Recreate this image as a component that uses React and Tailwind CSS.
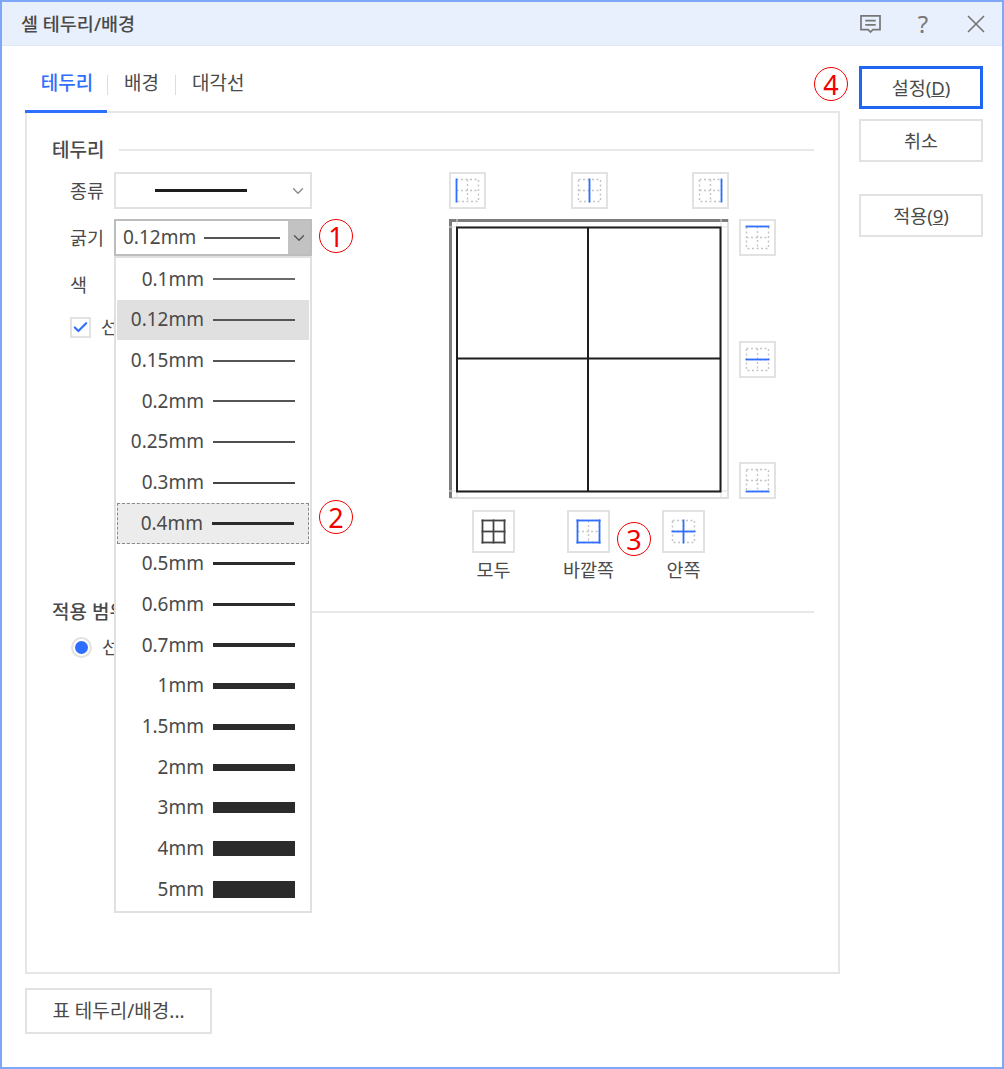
import React from 'react';
import { X, Check, ChevronDown } from 'lucide-react';

const WIDTHS = [
  { label: '0.1mm', line: 'h-[2px] bg-[#6a6a6a]' },
  { label: '0.12mm', line: 'h-[2px] bg-[#555555]', selected: true },
  { label: '0.15mm', line: 'h-[2px] bg-[#555555]' },
  { label: '0.2mm', line: 'h-[2px] bg-[#555555]' },
  { label: '0.25mm', line: 'h-[2px] bg-[#505050]' },
  { label: '0.3mm', line: 'h-[2px] bg-[#444444]' },
  { label: '0.4mm', line: 'h-[3px] bg-[#2b2b2b]', focused: true },
  { label: '0.5mm', line: 'h-[3px] bg-[#2b2b2b]' },
  { label: '0.6mm', line: 'h-[3px] bg-[#2b2b2b]' },
  { label: '0.7mm', line: 'h-[4px] bg-[#2b2b2b]' },
  { label: '1mm', line: 'h-[6px] bg-[#2b2b2b]' },
  { label: '1.5mm', line: 'h-[6px] bg-[#2b2b2b]' },
  { label: '2mm', line: 'h-[7px] bg-[#2b2b2b]' },
  { label: '3mm', line: 'h-[11px] bg-[#2b2b2b]' },
  { label: '4mm', line: 'h-[15px] bg-[#2b2b2b]' },
  { label: '5mm', line: 'h-[17px] bg-[#2b2b2b]' },
];

// dotted cell grid with the active lines drawn blue on top
function GridIcon({ size = 25, active = [], showDots = true, color = '#2f6fff' }) {
  const m = 12.5;
  return (
    <svg width={size} height={size} viewBox="0 0 25 25" fill="none">
      {showDots && (
        <g stroke="#c4c4c4" strokeWidth="1.4" strokeDasharray="2 2.5">
          <path d="M1.5 1.5H23.5V23.5H1.5Z" />
          <path d={`M${m} 1.5V23.5M1.5 ${m}H23.5`} />
        </g>
      )}
      <g stroke={color} strokeWidth="1.8">
        {active.includes('left') && <path d="M1.5 .5V24.5" />}
        {active.includes('vcenter') && <path d={`M${m} .5V24.5`} />}
        {active.includes('right') && <path d="M23.5 .5V24.5" />}
        {active.includes('top') && <path d="M.5 1.5H24.5" />}
        {active.includes('hcenter') && <path d={`M.5 ${m}H24.5`} />}
        {active.includes('bottom') && <path d="M.5 23.5H24.5" />}
      </g>
    </svg>
  );
}

function IconButton({ active }) {
  return (
    <button className="flex h-[37px] w-[37px] items-center justify-center border-2 border-[#e2e2e2] bg-white">
      <GridIcon active={active} />
    </button>
  );
}

function PresetButton({ label, active, color, showDots }) {
  return (
    <div className="flex w-[43px] flex-col items-center whitespace-nowrap">
      <button className="flex h-[43px] w-[43px] shrink-0 items-center justify-center border-2 border-[#e2e2e2] bg-white">
        <GridIcon active={active} color={color} showDots={showDots} />
      </button>
      <span className="mt-[5px] leading-[24px]">{label}</span>
    </div>
  );
}

function Circled({ n, className }) {
  return (
    <div className={`absolute flex h-[34px] w-[34px] items-center justify-center rounded-full border border-[#f00000] text-[27px] leading-none text-[#f00000] ${className}`}>
      {n}
    </div>
  );
}

function SectionTitle({ title, className = '' }) {
  return (
    <div className={`flex items-center gap-[15px] ${className}`}>
      <span className="text-[19px] leading-[20px] font-medium whitespace-nowrap">{title}</span>
      <div className="h-[2px] flex-1 bg-[#e8e8e8]" />
    </div>
  );
}

function Preview() {
  return (
    <svg width="280" height="280" viewBox="0 0 280 280" fill="none" className="shrink-0">
      <path d="M1 279V1H279V279H1" stroke="#dedede" strokeWidth="2" />
      <path d="M1.5 279V1.5H279" stroke="#7d7d7d" strokeWidth="3" />
      <path d="M0 8H280M0 272H280M8 0V280M272 0V280" stroke="#dedede" strokeWidth="1" />
      <path d="M8 8.5H271.5V272.5H8Z" stroke="#1d1d1d" strokeWidth="2" />
      <path d="M139 8V272M8 139.5H271" stroke="#1d1d1d" strokeWidth="2" />
    </svg>
  );
}

function WidthList() {
  return (
    <div className="absolute left-[87px] top-[143px] z-10 h-[657px] w-[198px] border-2 border-[#e0e0e0] bg-white pt-px">
      {WIDTHS.map((w) => (
        <div
          key={w.label}
          className={`mx-px flex h-[40.67px] items-center justify-end pr-[14px] ${w.selected ? 'bg-[#e0e0e0]' : ''} ${w.focused ? 'border border-dashed border-[#8a8a8a] bg-[#ececec]' : ''}`}
        >
          <span className="text-[19px] leading-none text-[#4a4a4a]">{w.label}</span>
          <div className={`ml-[9px] w-[82px] ${w.line}`} />
        </div>
      ))}
    </div>
  );
}

export default function App() {
  return (
    <div
      className="relative flex h-[1069px] w-[1004px] flex-col border-2 border-[#7fa7f7] bg-white text-[#4a4a4a]"
      style={{ fontFamily: '"Noto Sans", "Noto Sans CJK KR", sans-serif' }}
    >
      {/* Title bar */}
      <div className="flex h-[44px] shrink-0 items-center border-b border-[#dfe8f8] bg-[#e9f0fd] pl-[19px] pr-[11px]">
        <span className="text-[18.5px] font-medium">셀 테두리/배경</span>
        <div className="ml-auto flex items-center gap-[29px] text-[#777777]">
          <svg className="mr-[4px] mt-[2px]" width="21" height="19" viewBox="0 0 22 20" fill="none" stroke="#777777" strokeWidth="1.8">
            <path d="M1 1H21V15.5H13.5L11 18L8.5 15.5H1Z" />
            <path d="M5.5 6H16.5M5.5 10.5H16.5" />
          </svg>
          <span className="w-[18px] text-center text-[24px] leading-none">?</span>
          <X className="h-[30px] w-[30px]" strokeWidth={1.4} />
        </div>
      </div>

      <div className="flex flex-1 pl-[23px] pr-[19px] pt-[20px]">
        {/* Left side */}
        <div className="w-[815px]">
          <div className="relative z-10 flex h-[47px] items-start text-[19px] -mb-[2px]">
            <div className="flex h-[47px] w-[82px] items-start justify-center border-b-[3px] border-[#2f6fff] pt-[3px] pl-[2px] font-medium text-[#2f6fff]">테두리</div>
            <div className="flex h-[44px] items-start pt-[3px]">
              <div className="mt-[6px] h-[20px] w-px bg-[#dddddd]" />
              <span className="px-[16px]">배경</span>
              <div className="mt-[6px] h-[20px] w-px bg-[#dddddd]" />
              <span className="px-[16px]">대각선</span>
            </div>
          </div>

          <div className="relative h-[863px] border-2 border-[#e6e6e6] px-[25px] pt-[27px]">
            <SectionTitle title="테두리" className="mr-[-1px]" />

            <div className="mt-[12px] flex h-[431px]">
              {/* Type / width / colour */}
              <div className="w-[260px] pl-[18px] text-[18.5px]">
                <div className="flex h-[37px] items-center">
                  <span className="w-[44px]">종류</span>
                  <div className="flex h-[37px] w-[198px] items-center border-2 border-[#e2e2e2] pr-[3px]">
                    <div className="ml-[39px] h-[3px] w-[92px] bg-[#1d1d1d]" />
                    <ChevronDown className="ml-auto h-[18px] w-[18px] text-[#8a8a8a]" strokeWidth={1.8} />
                  </div>
                </div>
                <div className="mt-[10px] flex h-[37px] items-center">
                  <span className="w-[44px]">굵기</span>
                  <div className="flex h-[37px] w-[198px] items-center border-2 border-[#bdbdbd]">
                    <span className="ml-[7px] text-[19px] leading-none">0.12mm</span>
                    <div className="ml-[8px] h-[2px] w-[76px] bg-[#555555]" />
                    <div className="ml-auto flex h-full w-[22px] items-center justify-center bg-[#c2c2c2]">
                      <ChevronDown className="h-[18px] w-[18px] text-[#555555]" strokeWidth={1.8} />
                    </div>
                  </div>
                </div>
                <div className="mt-[10px] flex h-[37px] items-center">
                  <span className="w-[44px]">색</span>
                </div>
                <div className="mt-[13px] flex h-[22px] items-center">
                  <div className="flex h-[21px] w-[21px] items-center justify-center border-2 border-[#e2e2e2]">
                    <Check className="h-[19px] w-[19px] text-[#2f6fff]" strokeWidth={3} />
                  </div>
                  <span className="ml-[10px] whitespace-nowrap">선택</span>
                </div>
              </div>

              {/* Border buttons and preview */}
              <div className="ml-[137px] w-[327px] text-[18.5px]">
                <div className="flex w-[280px] justify-between">
                  <IconButton active={['left']} />
                  <IconButton active={['vcenter']} />
                  <IconButton active={['right']} />
                </div>
                <div className="mt-[10px] flex">
                  <Preview />
                  <div className="ml-[10px] flex w-[37px] flex-col justify-between">
                    <IconButton active={['top']} />
                    <IconButton active={['hcenter']} />
                    <IconButton active={['bottom']} />
                  </div>
                </div>
                <div className="mt-[11px] flex gap-[52px] pl-[23px]">
                  <PresetButton label="모두" active={['left', 'right', 'top', 'bottom', 'vcenter', 'hcenter']} color="#444444" showDots={false} />
                  <PresetButton label="바깥쪽" active={['left', 'right', 'top', 'bottom']} />
                  <PresetButton label="안쪽" active={['vcenter', 'hcenter']} />
                </div>
              </div>
            </div>

            <SectionTitle title="적용 범위" className="mt-[-1px] mr-[-1px]" />
            <div className="ml-[19px] mt-[15px] flex h-[20px] items-center text-[18.5px]">
              <div className="flex h-[21px] w-[21px] items-center justify-center rounded-full border-2 border-[#e2e2e2]">
                <div className="h-[13px] w-[13px] rounded-full bg-[#2f6fff]" />
              </div>
              <span className="ml-[10px] whitespace-nowrap">선택</span>
            </div>

            <WidthList />
            <Circled n="1" className="left-[292px] top-[106px]" />
            <Circled n="2" className="left-[292px] top-[387px]" />
            <Circled n="3" className="left-[590px] top-[409px]" />
          </div>

          <button className="mt-[14px] h-[46px] w-[187px] border-2 border-[#e2e2e2] bg-white text-[19px]">표 테두리/배경...</button>
        </div>

        {/* Dialog buttons */}
        <div className="relative ml-[19px] flex w-[124px] flex-col text-[18.5px]">
          <Circled n="4" className="left-[-45px] top-[1px]" />
          <button className="h-[43px] border-[3px] border-[#1f66f2] bg-white">설정(<span className="underline">D</span>)</button>
          <button className="mt-[10px] h-[43px] border-2 border-[#e2e2e2] bg-white">취소</button>
          <button className="mt-[32px] h-[43px] border-2 border-[#e2e2e2] bg-white">적용(<span className="underline">9</span>)</button>
        </div>
      </div>
    </div>
  );
}
